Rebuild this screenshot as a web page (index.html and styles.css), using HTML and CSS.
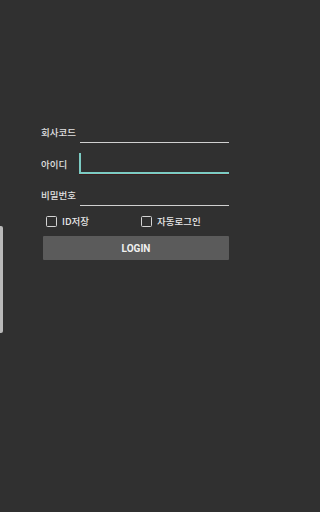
FILE: index.html
```html
<!DOCTYPE html>
<html lang="ko">
<head>
<meta charset="utf-8">
<link rel="stylesheet" href="styles.css">
</head>
<body>
<div class="page">
<div class="edge"></div>
<form class="login">
  <div class="row r1">
    <span class="label">회사코드</span>
    <div class="field"></div>
  </div>
  <div class="row r2">
    <span class="label">아이디</span>
    <div class="field focus"><span class="cursor"></span></div>
  </div>
  <div class="row r3">
    <span class="label">비밀번호</span>
    <div class="field"></div>
  </div>
  <div class="checks">
    <label class="check first"><span class="box"></span><span class="ctext">ID저장</span></label>
    <label class="check"><span class="box"></span><span class="ctext">자동로그인</span></label>
  </div>
  <div class="button">LOGIN</div>
</form>
</div>
</body>
</html>
```
FILE: styles.css
```css
html, body {
  margin: 0;
  padding: 0;
  background: #303030;
  height: 100%;
}
body {
  font-family: "Noto Sans CJK KR", "Noto Sans", Roboto, sans-serif;
  color: #e0e0e0;
  overflow: hidden;
}
.page {
  position: relative;
  width: 273px;
  height: 512px;
  overflow: hidden;
}
.edge {
  position: absolute;
  left: 0;
  top: 226px;
  width: 3px;
  height: 107px;
  background: #b9b9b9;
  border-radius: 0 2px 2px 0;
}
.login {
  display: flex;
  flex-direction: column;
  padding: 111px 44px 0 41px;
  margin: 0;
}
.row {
  display: flex;
  align-items: flex-end;
}
.r1 { height: 32px; }
.r2 { height: 32px; }
.r3 { height: 31px; }
.label {
  width: 38px;
  font-size: 9.5px;
  font-weight: 500;
  line-height: 13px;
  margin-bottom: 4px;
  white-space: nowrap;
  color: #e0e0e0;
}
.field {
  flex: 1;
  height: 20px;
  margin-left: 1px;
  border-bottom: 1px solid #d0d0d0;
}
.field.focus {
  margin-left: 0;
  height: 19px;
  border-bottom: 2px solid #7ccbc3;
  box-shadow: 0 1px 0 #3f1c1c;
  display: flex;
  align-items: flex-start;
  margin-bottom: 1px;
}
.cursor {
  width: 1.5px;
  height: 19px;
  background: #7ccbc3;
}
.checks {
  display: flex;
  align-items: center;
  height: 30px;
  padding-left: 5px;
}
.check {
  display: flex;
  align-items: center;
  gap: 5px;
}
.check.first {
  width: 95px;
}
.box {
  width: 9px;
  height: 9px;
  border: 1.5px solid #d4d4d4;
  border-radius: 1.5px;
}
.ctext {
  font-size: 9.5px;
  font-weight: 500;
  line-height: 12px;
  color: #e8e8e8;
}
.button {
  margin-left: 2px;
  height: 24px;
  background: #5b5b5b;
  border-radius: 1px;
  display: flex;
  align-items: center;
  justify-content: center;
  font-family: Roboto, "Noto Sans", sans-serif;
  font-weight: bold;
  font-size: 10px;
  color: #f0f0f0;
}
```
